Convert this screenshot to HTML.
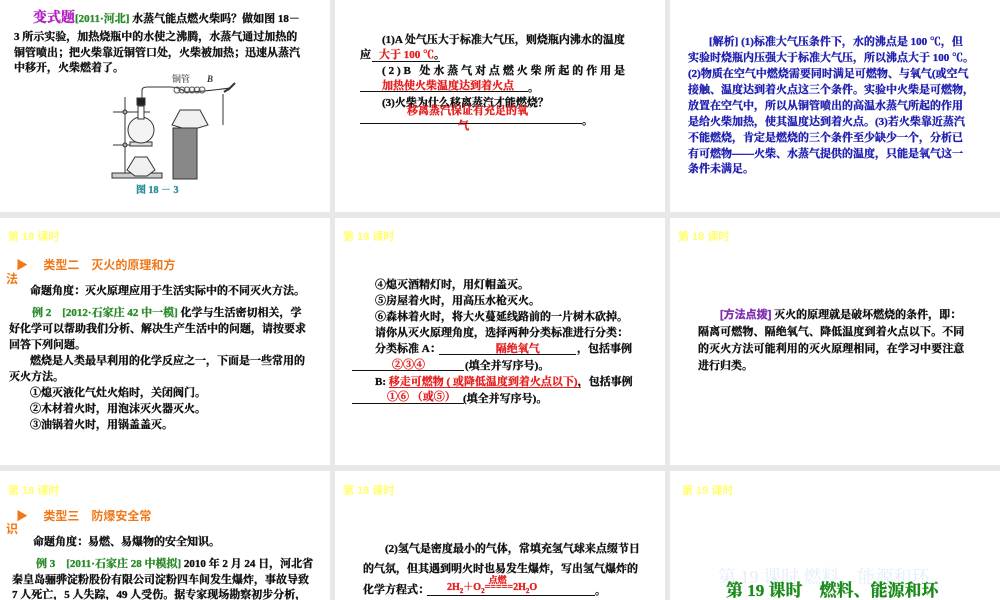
<!DOCTYPE html>
<html><head><meta charset="utf-8"><style>
*{margin:0;padding:0;box-sizing:border-box}
body{width:1000px;height:600px;background:#e8e8e8;position:relative;overflow:hidden;font-family:"Liberation Serif","Noto Serif CJK SC",serif;font-weight:bold;font-size:11px;color:#111}
.s{position:absolute;background:#fff;overflow:hidden}
.t{position:absolute;white-space:nowrap;line-height:14px;-webkit-text-stroke:0.35px currentColor}
.h{position:absolute;color:#ffff70;font-family:"Liberation Sans","Noto Sans CJK SC",sans-serif;font-size:11px;font-weight:bold}
.o{color:#f07818;font-family:"Liberation Sans","Noto Sans CJK SC",sans-serif;font-size:12px;-webkit-text-stroke:0}
.g{color:#2a8a2a}
.r{color:#e52020}
.b{color:#2020b0}
.u{position:absolute;height:1px;background:#111}
</style></head><body>

<!-- Slide 1 -->
<div class="s" style="left:0;top:0;width:330px;height:212px">
<div class="t" style="left:33px;top:12px"><span style="color:#b020c0;font-size:14px">变式题</span><span class="g">[2011·河北]</span> 水蒸气能点燃火柴吗？做如图 18－</div>
<div class="t" style="left:14px;top:30px">3 所示实验，加热烧瓶中的水使之沸腾，水蒸气通过加热的</div>
<div class="t" style="left:14px;top:46px">铜管喷出；把火柴靠近铜管口处，火柴被加热；迅速从蒸汽</div>
<div class="t" style="left:14px;top:61px">中移开，火柴燃着了。</div>
<svg style="position:absolute;left:100px;top:70px" width="140" height="115" viewBox="0 0 140 115" fill="none" stroke="#333" stroke-width="1">
<text x="72" y="12" font-size="9" fill="#666" stroke="none" font-family="Noto Serif CJK SC">铜管</text>
<text x="107" y="12" font-size="9" fill="#333" stroke="none" font-style="italic">B</text>
<rect x="12" y="103" width="50" height="5" fill="#ccc"/>
<line x1="25" y1="27" x2="25" y2="103"/>
<line x1="13" y1="42" x2="50" y2="42"/><circle cx="25" cy="42" r="2" fill="#aaa"/>
<line x1="13" y1="75" x2="50" y2="75"/><circle cx="25" cy="75" r="2" fill="#aaa"/>
<rect x="30" y="72" width="22" height="4" fill="#ddd"/>
<circle cx="41" cy="60" r="13" fill="#f4f4f4"/>
<rect x="38" y="36" width="6" height="13" fill="#fff"/>
<rect x="37" y="28" width="8" height="7" fill="#222"/>
<path d="M42 28 V20 Q42 17 48 17 H70 Q80 17 85 22 Q100 22 130 18"/>
<g stroke="#555"><circle cx="77" cy="20" r="3"/><circle cx="82" cy="20" r="3"/><circle cx="87" cy="20" r="3"/><circle cx="92" cy="20" r="3"/><circle cx="97" cy="20" r="3"/><circle cx="102" cy="20" r="3"/></g>
<path d="M128 20 L135 13 M124 22 L130 18" stroke-width="2"/>
<line x1="123" y1="24" x2="123" y2="55"/>
<path d="M80 40 L100 40 L108 55 L98 58 L82 58 L72 55 Z" fill="#f0f0f0"/>
<rect x="73" y="58" width="24" height="51" fill="#888"/>
<path d="M35 87 L47 87 L55 100 L47 106 L35 106 L27 100 Z" fill="#f0f0f0"/>
</svg>
<div class="t" style="left:136px;top:184px;color:#2a8f9a;font-size:10px">图 18 － 3</div>
</div>

<!-- Slide 2 -->
<div class="s" style="left:335px;top:0;width:330px;height:212px">
<div class="t" style="left:47px;top:33px">(1)A 处气压大于标准大气压，则烧瓶内沸水的温度</div>
<div class="t" style="left:25px;top:48px">应<span class="r" style="margin-left:8px">大于 100 ℃</span>。</div>
<div class="u" style="left:37px;top:61px;width:68px"></div>
<div class="t" style="left:47px;top:64px;letter-spacing:2.9px">(2)B 处水蒸气对点燃火柴所起的作用是</div>
<div class="t r" style="left:47px;top:79px">加热使火柴温度达到着火点</div>
<div class="u" style="left:25px;top:91px;width:168px"></div><div class="t" style="left:193px;top:81px">。</div>
<div class="t" style="left:47px;top:96px">(3)火柴为什么移离蒸汽才能燃烧？</div>
<div class="t r" style="left:72px;top:104px">移离蒸汽保证有充足的氧</div>
<div class="u" style="left:25px;top:123px;width:222px"></div><div class="t" style="left:247px;top:114px">。</div>
<div class="t r" style="left:123px;top:119px">气</div>
</div>

<!-- Slide 3 -->
<div class="s b" style="left:670px;top:0;width:330px;height:212px">
<div class="t" style="left:39px;top:35px">[解析] (1)标准大气压条件下，水的沸点是 100 ℃，但</div>
<div class="t" style="left:18px;top:51px">实验时烧瓶内压强大于标准大气压，所以沸点大于 100 ℃。</div>
<div class="t" style="left:18px;top:67px">(2)物质在空气中燃烧需要同时满足可燃物、与氧气(或空气</div>
<div class="t" style="left:18px;top:83px">接触、温度达到着火点这三个条件。实验中火柴是可燃物，</div>
<div class="t" style="left:18px;top:99px">放置在空气中，所以从铜管喷出的高温水蒸气所起的作用</div>
<div class="t" style="left:18px;top:115px">是给火柴加热，使其温度达到着火点。(3)若火柴靠近蒸汽</div>
<div class="t" style="left:18px;top:131px">不能燃烧，肯定是燃烧的三个条件至少缺少一个，分析已</div>
<div class="t" style="left:18px;top:147px">有可燃物——火柴、水蒸气提供的温度，只能是氧气这一</div>
<div class="t" style="left:18px;top:162px">条件未满足。</div>
</div>

<!-- Slide 4 -->
<div class="s" style="left:0;top:218px;width:330px;height:247px">
<div class="h" style="left:8px;top:10px">第 18 课时</div>
<div class="t o" style="left:16px;top:40px">▶　 类型二　灭火的原理和方</div>
<div class="t o" style="left:6px;top:54px">法</div>
<div class="t" style="left:30px;top:66px">命题角度：灭火原理应用于生活实际中的不同灭火方法。</div>
<div class="t" style="left:32px;top:88px"><span class="g">例 2　[2012·石家庄 42 中一模]</span> 化学与生活密切相关，学</div>
<div class="t" style="left:9px;top:104px">好化学可以帮助我们分析、解决生产生活中的问题，请按要求</div>
<div class="t" style="left:9px;top:120px">回答下列问题。</div>
<div class="t" style="left:30px;top:136px">燃烧是人类最早利用的化学反应之一，下面是一些常用的</div>
<div class="t" style="left:9px;top:152px">灭火方法。</div>
<div class="t" style="left:30px;top:168px">①熄灭液化气灶火焰时，关闭阀门。</div>
<div class="t" style="left:30px;top:184px">②木材着火时，用泡沫灭火器灭火。</div>
<div class="t" style="left:30px;top:200px">③油锅着火时，用锅盖盖灭。</div>
</div>

<!-- Slide 5 -->
<div class="s" style="left:335px;top:218px;width:330px;height:247px">
<div class="h" style="left:8px;top:10px">第 18 课时</div>
<div class="t" style="left:40px;top:60px">④熄灭酒精灯时，用灯帽盖灭。</div>
<div class="t" style="left:40px;top:76px">⑤房屋着火时，用高压水枪灭火。</div>
<div class="t" style="left:40px;top:92px">⑥森林着火时，将大火蔓延线路前的一片树木砍掉。</div>
<div class="t" style="left:40px;top:108px">请你从灭火原理角度，选择两种分类标准进行分类：</div>
<div class="t" style="left:40px;top:124px">分类标准 A：<span class="r" style="margin-left:55px">隔绝氧气</span></div>
<div class="u" style="left:104px;top:136px;width:137px"></div><div class="t" style="left:242px;top:124px">，包括事例</div>
<div class="t r" style="left:57px;top:140px">②③④</div>
<div class="u" style="left:17px;top:152px;width:112px"></div><div class="t" style="left:130px;top:141px">(填全并写序号)。</div>
<div class="t" style="left:40px;top:157px">B: <span class="r">移走可燃物 ( 或降低温度到着火点以下)</span>，包括事例</div>
<div class="u" style="left:54px;top:169px;width:192px;background:#e52020"></div>
<div class="t r" style="left:52px;top:172px">①⑥ （或⑤）</div>
<div class="u" style="left:17px;top:185px;width:112px"></div><div class="t" style="left:128px;top:174px">(填全并写序号)。</div>
</div>

<!-- Slide 6 -->
<div class="s" style="left:670px;top:218px;width:330px;height:247px">
<div class="h" style="left:8px;top:10px">第 18 课时</div>
<div class="t" style="left:50px;top:90px"><span style="color:#8030b0;font-family:'Liberation Sans','Noto Sans CJK SC',sans-serif">[方法点拨]</span> 灭火的原理就是破坏燃烧的条件，即：</div>
<div class="t" style="left:28px;top:107px;letter-spacing:0.1px">隔离可燃物、隔绝氧气、降低温度到着火点以下。不同</div>
<div class="t" style="left:28px;top:124px;letter-spacing:0.1px">的灭火方法可能利用的灭火原理相同，在学习中要注意</div>
<div class="t" style="left:28px;top:141px">进行归类。</div>
</div>

<!-- Slide 7 -->
<div class="s" style="left:0;top:471px;width:330px;height:129px">
<div class="h" style="left:8px;top:11px">第 18 课时</div>
<div class="t o" style="left:16px;top:38px">▶　 类型三　防爆安全常</div>
<div class="t o" style="left:6px;top:51px">识</div>
<div class="t" style="left:33px;top:64px">命题角度：易燃、易爆物的安全知识。</div>
<div class="t" style="left:36px;top:86px"><span class="g">例 3　[2011·石家庄 28 中模拟]</span> 2010 年 2 月 24 日，河北省</div>
<div class="t" style="left:12px;top:102px">秦皇岛骊骅淀粉股份有限公司淀粉四车间发生爆炸，事故导致</div>
<div class="t" style="left:12px;top:117px">7 人死亡，5 人失踪，49 人受伤。据专家现场勘察初步分析，</div>
</div>

<!-- Slide 8 -->
<div class="s" style="left:335px;top:471px;width:330px;height:129px">
<div class="h" style="left:8px;top:11px">第 18 课时</div>
<div class="t" style="left:50px;top:71px">(2)氢气是密度最小的气体，常填充氢气球来点缀节日</div>
<div class="t" style="left:28px;top:91px">的气氛，但其遇到明火时也易发生爆炸，写出氢气爆炸的</div>
<div class="t" style="left:28px;top:112px">化学方程式：</div>
<div class="t r" style="left:112px;top:110px;font-size:10px">2H<sub style="font-size:7px">2</sub>＋O<sub style="font-size:7px">2</sub><span style="position:relative"><span style="position:absolute;left:4px;top:-9px;font-size:9px">点燃</span>=====</span>2H<sub style="font-size:7px">2</sub>O</div>
<div class="u" style="left:92px;top:124px;width:168px"></div><div class="t" style="left:260px;top:113px">。</div>
</div>

<!-- Slide 9 -->
<div class="s" style="left:670px;top:471px;width:330px;height:129px">
<div class="h" style="left:12px;top:11px">第 19 课时</div>
<div class="t" style="left:48px;top:96px;font-size:18px;color:#e4eef8;font-weight:normal;line-height:20px;-webkit-text-stroke:0">第 19 课时 燃料、能源和环</div>
<div class="t" style="left:56px;top:110px;font-size:17px;color:#1a8a1a;line-height:20px">第 19 课时　燃料、能源和环</div>
</div>
</body></html>
